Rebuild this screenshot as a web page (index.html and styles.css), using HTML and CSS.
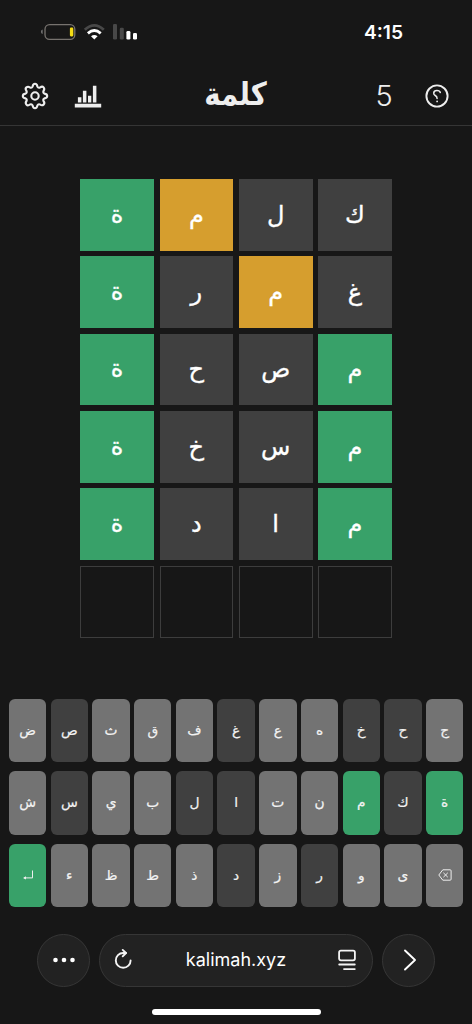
FILE: index.html
```html
<!DOCTYPE html>
<html lang="ar">
<head>
<meta charset="utf-8">
<title>كلمة</title>
<link rel="stylesheet" href="styles.css">
</head>
<body>
<div class="status">
  <svg class="indicators" width="98" height="20" viewBox="0 0 98 20">
    <path d="M2.6 6.5v4.6q-1.6-.6-1.6-2.3t1.6-2.3z" fill="#777"/>
    <rect x="5" y="1.6" width="29.8" height="14.8" rx="4.6" fill="none" stroke="#77736f" stroke-width="1.3"/>
    <rect x="29.9" y="4.6" width="3.4" height="8.8" rx="1.1" fill="#f5dc14"/>
    <g fill="none" stroke-width="2.8">
      <path d="M44.8 6.7q9.5-8.6 19 0" stroke="#484848"/>
      <path d="M47.9 10.4q6.4-5.8 12.8 0" stroke="#fff"/>
    </g>
    <path d="M51 13.3q3.3-2.6 6.6 0l-3.3 3.3z" fill="#fff"/>
    <rect x="73" y="1" width="4" height="15.5" rx="1.3" fill="#484848"/>
    <rect x="79.8" y="4.8" width="4" height="11.7" rx="1.3" fill="#484848"/>
    <rect x="86.4" y="8" width="4" height="8.5" rx="1.3" fill="#fff"/>
    <rect x="93" y="10" width="4" height="6.5" rx="1.3" fill="#fff"/>
  </svg>
  <span class="clock">4:15</span>
</div>
<header class="header">
  <svg class="gear" width="28" height="28" viewBox="0 0 28 28" fill="none" stroke="#eee" stroke-width="2.1" stroke-linejoin="round">
    <path d="M11.6 4.6 Q12 1.8 14 1.8 T16.4 4.6 Q17.2 6.2 19 5.5 Q21.2 3.8 22.6 5.4 T22.5 9 Q21.8 10.8 23.4 11.6 Q26.2 12 26.2 14 T23.4 16.4 Q21.8 17.2 22.5 19 Q24.2 21.2 22.6 22.6 T19 22.5 Q17.2 21.8 16.4 23.4 Q16 26.2 14 26.2 T11.6 23.4 Q10.8 21.8 9 22.5 Q6.8 24.2 5.4 22.6 T5.5 19 Q6.2 17.2 4.6 16.4 Q1.8 16 1.8 14 T4.6 11.6 Q6.2 10.8 5.5 9 Q3.8 6.8 5.4 5.4 T9 5.5 Q10.8 6.2 11.6 4.6Z"/>
    <circle cx="14" cy="14" r="3.7"/>
  </svg>
  <svg class="chart" width="28" height="28" viewBox="0 0 28 28" fill="#eee">
    <path d="M.8 21.8h26.4v3.6H.8zM3.9 15.2h3.5v5.2H3.9zM8.9 8.7h3.5v11.7H8.9zM14 13.8h3.3v6.6H14zM18.9 3.8h3.5v16.6h-3.5z"/>
  </svg>
  <h1 class="title">كلمة</h1>
  <span class="count">5</span>
  <svg class="help" width="26" height="26" viewBox="0 0 26 26" fill="none" stroke="#eee" stroke-width="1.9" stroke-linecap="round">
    <circle cx="13" cy="13" r="10.6"/>
    <path d="M16.3 9.5C15.6 7 10 6.6 9.7 10.1C9.6 13 13.1 12 13.1 15.4" stroke-width="1.5"/>
    <circle cx="13.1" cy="18.4" r=".9" fill="#eee" stroke="none"/>
  </svg>
</header>
<main class="board" dir="ltr">
  <div class="cell hit">ة</div><div class="cell near">م</div><div class="cell miss">ل</div><div class="cell miss">ك</div>
  <div class="cell hit">ة</div><div class="cell miss">ر</div><div class="cell near">م</div><div class="cell miss">غ</div>
  <div class="cell hit">ة</div><div class="cell miss">ح</div><div class="cell miss">ص</div><div class="cell hit">م</div>
  <div class="cell hit">ة</div><div class="cell miss">خ</div><div class="cell miss">س</div><div class="cell hit">م</div>
  <div class="cell hit">ة</div><div class="cell miss">د</div><div class="cell miss">ا</div><div class="cell hit">م</div>
  <div class="cell"></div><div class="cell"></div><div class="cell"></div><div class="cell"></div>
</main>
<section class="keyboard" dir="ltr">
  <div class="key">ض</div><div class="key miss">ص</div><div class="key">ث</div><div class="key">ق</div><div class="key">ف</div><div class="key miss">غ</div><div class="key">ع</div><div class="key">ه</div><div class="key miss">خ</div><div class="key miss">ح</div><div class="key">ج</div>
  <div class="key">ش</div><div class="key miss">س</div><div class="key">ي</div><div class="key">ب</div><div class="key miss">ل</div><div class="key miss">ا</div><div class="key">ت</div><div class="key">ن</div><div class="key hit">م</div><div class="key miss">ك</div><div class="key hit">ة</div>
  <div class="key hit"><svg width="12" height="12" viewBox="0 0 12 12" fill="none" stroke="#eee" stroke-width="1"><path d="M10.5 1.5v7.4H2"/><path d="M4 7.2v3.4L1 8.9z" fill="#eee" stroke="none"/></svg></div><div class="key">ء</div><div class="key">ظ</div><div class="key">ط</div><div class="key">ذ</div><div class="key miss">د</div><div class="key">ز</div><div class="key miss">ر</div><div class="key">و</div><div class="key">ى</div><div class="key"><svg width="14" height="12" viewBox="0 0 14 12" fill="none" stroke="#eee" stroke-width="1" stroke-linejoin="round"><path d="M4.8.8h7.3q1 0 1 1v8.4q0 1-1 1H4.8L.8 6z"/><path d="M5.4 3.8l4.4 4.4M9.8 3.8L5.4 8.2"/></svg></div>
</section>
<footer class="browser" dir="ltr">
  <div class="round"><svg width="24" height="6" viewBox="0 0 24 6" fill="#fff"><circle cx="3.5" cy="3" r="2.3"/><circle cx="12" cy="3" r="2.3"/><circle cx="20.5" cy="3" r="2.3"/></svg></div>
  <div class="address">
    <svg width="20" height="22" viewBox="0 0 20 22" fill="none" stroke="#f4f4f4" stroke-width="1.9" stroke-linecap="round" stroke-linejoin="round"><path d="M12 4H9.2A7.4 7.4 0 1 0 16.6 11.4"/><path d="M8.7 .9L12 4L8.7 7.3"/></svg>
    <span class="url">kalimah.xyz</span>
    <svg width="18" height="22" viewBox="0 0 18 22" fill="none" stroke="#f4f4f4" stroke-width="1.8" stroke-linecap="round"><rect x="1.1" y="1.7" width="15.8" height="9.6" rx="1.7"/><path d="M1.2 15.5h15.6M6 20.1h10.8"/></svg>
  </div>
  <div class="round"><svg width="14" height="22" viewBox="0 0 14 22" fill="none" stroke="#fff" stroke-width="1.9" stroke-linecap="round" stroke-linejoin="round"><path d="M3 1.5L13 11L3 20.5"/></svg></div>
</footer>
<div class="home"></div>
</body>
</html>
```
FILE: styles.css
```css
* { box-sizing: border-box; }
body {
  margin: 0;
  width: 472px;
  height: 1024px;
  overflow: hidden;
  background: #171717;
  color: #fff;
  font-family: "DejaVu Sans", sans-serif;
  display: flex;
  flex-direction: column;
}
svg { display: block; flex: none; overflow: visible; }
.status {
  height: 66px;
  padding: 22.5px 69px 0 40px;
  display: flex;
  justify-content: space-between;
  align-items: flex-start;
}
.clock { font: 600 19.2px/19px Inter, sans-serif; }
.header {
  height: 60px;
  border-bottom: 1.5px solid #353535;
  display: grid;
  grid-template-columns: 28px 53px minmax(0, 1fr) 30px 25px 26px;
  padding: 0 22px 0 21px;
  align-items: center;
}
.chart { margin-left: 25px; }
.title {
  margin: 0;
  text-align: center;
  font: 700 27.5px/40px "DejaVu Sans", sans-serif;
  color: #eee;
  transform: translateY(-3px) scaleY(1.16);
}
.count {
  font: 300 29px/30px Inter, sans-serif;
  color: #eee;
  text-align: center;
}
.help { grid-column: 6; }
.board {
  width: 311.7px;
  height: 459px;
  margin: 52.7px 0 0 80.2px;
  display: grid;
  grid-template-columns: repeat(4, 1fr);
  grid-template-rows: repeat(6, 1fr);
  gap: 5.6px;
}
.cell {
  border: 1px solid #3d3d3d;
  display: flex;
  align-items: center;
  justify-content: center;
  font-size: 24px;
  line-height: 28px;
  -webkit-text-stroke: .35px #fff;
}
.miss { background: #404040; border-color: #404040; }
.hit { background: #38a169; border-color: #38a169; }
.near { background: #d69e2e; border-color: #d69e2e; }
.keyboard {
  width: 454.3px;
  height: 208.4px;
  margin: 61.1px 0 0 9px;
  display: grid;
  grid-template-columns: repeat(11, 1fr);
  grid-template-rows: repeat(3, 1fr);
  gap: 8.7px 4.4px;
}
.key {
  border-radius: 6px;
  background: #737373;
  color: #f2f2f2;
  display: flex;
  align-items: center;
  justify-content: center;
  font-size: 13.8px;
  line-height: 18px;
  padding-bottom: 1px;
  -webkit-text-stroke: .2px #f2f2f2;
}
.key.miss { background: #404040; }
.key.hit { background: #38a169; }
.browser {
  margin: 26.8px 37px 0;
  height: 53px;
  display: flex;
  gap: 9px;
}
.round, .address {
  background: #222;
  border: 1px solid #363636;
  border-radius: 27px;
  display: flex;
  align-items: center;
}
.round { width: 53px; flex: none; justify-content: center; }
.address { flex: 1; padding: 0 16px 0 14px; justify-content: space-between; }
.url { font: 400 18px/24px Inter, sans-serif; }
.home {
  width: 169px;
  height: 6px;
  margin: 22px auto 0;
  border-radius: 3px;
  background: #fff;
}
```
